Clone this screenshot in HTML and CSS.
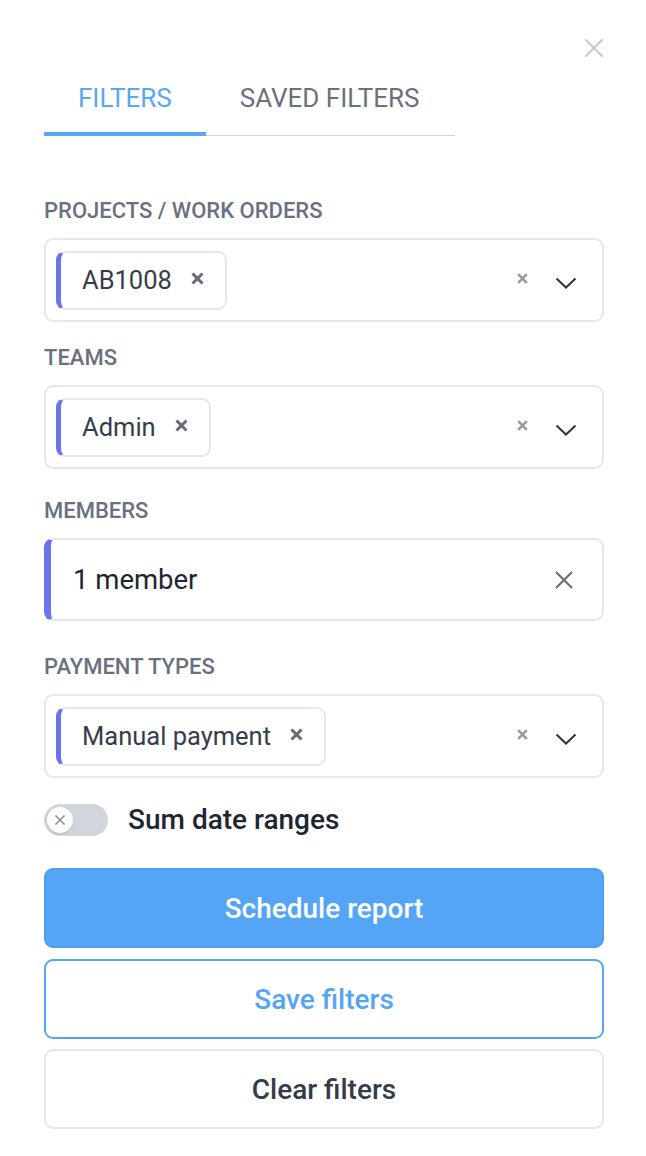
FILE: index.html
```html
<!DOCTYPE html>
<html lang="en">
<head>
    <meta charset="UTF-8">
    <meta name="viewport" content="width=device-width, initial-scale=1.0">
    <title>Filters</title>
    <link rel="stylesheet" href="styles.css">
</head>
<body>
    <div class="drawer">
        <div class="drawer-top">
            <button class="close-btn" aria-label="Close">
                <svg width="20" height="20" viewBox="0 0 20 20"><path d="M2 2L18 18M18 2L2 18" stroke="#c9c9c9" stroke-width="2.2" stroke-linecap="round"/></svg>
            </button>
        </div>

        <div class="tabs">
            <div class="tab active">Filters</div>
            <div class="tab">Saved filters</div>
        </div>

        <div class="field field-projects">
            <div class="field-label">Projects / Work orders</div>
            <div class="select">
                <div class="tags">
                    <span class="tag">AB1008
                        <svg class="tag-x" width="13" height="13" viewBox="0 0 13 13"><path d="M1.5 1.5L11.5 11.5M11.5 1.5L1.5 11.5" stroke="#656b78" stroke-width="3"/></svg>
                    </span>
                </div>
                <svg class="clear-x" width="11" height="11" viewBox="0 0 11 11"><path d="M1.2 1.2L9.8 9.8M9.8 1.2L1.2 9.8" stroke="#9b9b9b" stroke-width="2.6"/></svg>
                <svg class="chevron" width="22" height="12" viewBox="0 0 22 12"><path d="M1.5 1.5L11 10.5L20.5 1.5" fill="none" stroke="#2d3544" stroke-width="2"/></svg>
            </div>
        </div>

        <div class="field field-teams">
            <div class="field-label">Teams</div>
            <div class="select">
                <div class="tags">
                    <span class="tag">Admin
                        <svg class="tag-x" width="13" height="13" viewBox="0 0 13 13"><path d="M1.5 1.5L11.5 11.5M11.5 1.5L1.5 11.5" stroke="#656b78" stroke-width="3"/></svg>
                    </span>
                </div>
                <svg class="clear-x" width="11" height="11" viewBox="0 0 11 11"><path d="M1.2 1.2L9.8 9.8M9.8 1.2L1.2 9.8" stroke="#9b9b9b" stroke-width="2.6"/></svg>
                <svg class="chevron" width="22" height="12" viewBox="0 0 22 12"><path d="M1.5 1.5L11 10.5L20.5 1.5" fill="none" stroke="#2d3544" stroke-width="2"/></svg>
            </div>
        </div>

        <div class="field field-members">
            <div class="field-label">Members</div>
            <div class="select select-members">
                <span class="members-value">1 member</span>
                <svg class="members-x" width="20" height="20" viewBox="0 0 20 20"><path d="M2 2L18 18M18 2L2 18" stroke="#6f6f6f" stroke-width="2.2"/></svg>
            </div>
        </div>

        <div class="field field-payments">
            <div class="field-label">Payment types</div>
            <div class="select">
                <div class="tags">
                    <span class="tag">Manual payment
                        <svg class="tag-x" width="13" height="13" viewBox="0 0 13 13"><path d="M1.5 1.5L11.5 11.5M11.5 1.5L1.5 11.5" stroke="#656b78" stroke-width="3"/></svg>
                    </span>
                </div>
                <svg class="clear-x" width="11" height="11" viewBox="0 0 11 11"><path d="M1.2 1.2L9.8 9.8M9.8 1.2L1.2 9.8" stroke="#9b9b9b" stroke-width="2.6"/></svg>
                <svg class="chevron" width="22" height="12" viewBox="0 0 22 12"><path d="M1.5 1.5L11 10.5L20.5 1.5" fill="none" stroke="#2d3544" stroke-width="2"/></svg>
            </div>
        </div>

        <label class="toggle-row">
            <span class="toggle">
                <span class="knob">
                    <svg width="12" height="12" viewBox="0 0 12 12"><path d="M1.5 1.5L10.5 10.5M10.5 1.5L1.5 10.5" stroke="#8a8f99" stroke-width="1.6"/></svg>
                </span>
            </span>
            <span class="toggle-text">Sum date ranges</span>
        </label>

        <div class="actions">
            <button class="btn btn-primary">Schedule report</button>
            <button class="btn btn-outline">Save filters</button>
            <button class="btn btn-plain">Clear filters</button>
        </div>
    </div>
</body>
</html>
```

FILE: styles.css
```css
body {
    margin: 0;
    font-family: Roboto, "Liberation Sans", sans-serif;
    background-color: #fff;
    color: #1f2937;
}
.drawer {
    width: 560px;
    padding: 38px 42px 0 44px;
}
.drawer-top {
    display: flex;
    justify-content: flex-end;
    height: 40px;
}
.close-btn {
    background: none;
    border: none;
    padding: 0;
    width: 20px;
    height: 20px;
    cursor: pointer;
}
.tabs {
    display: flex;
    width: 411px;
    border-bottom: 1px solid #d4d4d8;
    margin-top: 5px;
}
.tab {
    padding: 0 34px 19px;
    font-size: 26px;
    line-height: 30px;
    text-transform: uppercase;
    color: #6b7080;
    margin-bottom: -1px;
    border-bottom: 4px solid transparent;
}
.tab.active {
    color: #59a8f6;
    border-bottom-color: #59a8f6;
}
.field-label {
    font-size: 22px;
    line-height: 24px;
    font-weight: 500;
    text-transform: uppercase;
    color: #6b7080;
    margin-bottom: 15px;
}
.field-projects {
    margin-top: 63px;
}
.field-teams {
    margin-top: 24px;
}
.field-members {
    margin-top: 30px;
}
.field-payments {
    margin-top: 34px;
}
.select {
    display: flex;
    align-items: center;
    height: 84px;
    box-sizing: border-box;
    border: 2px solid #e6e7ec;
    border-radius: 9px;
    padding: 0 25px 0 10px;
}
.tags {
    flex: 1;
    display: flex;
}
.tag {
    display: inline-flex;
    align-items: center;
    height: 59px;
    box-sizing: border-box;
    padding: 0 21px 0 21px;
    border: 2px solid #e6e7ec;
    border-left: 5px solid #6b74ee;
    border-radius: 9px;
    font-size: 25.5px;
    color: #353d4b;
}
.tag-x {
    margin-left: 19px;
    margin-top: -4px;
}
.clear-x {
    margin-right: 27px;
    margin-top: -4px;
}
.chevron {
    margin-top: 6px;
}
.select-members {
    height: 83px;
    border-left: 7px solid #6b74ee;
    padding: 0 28px 0 22px;
    justify-content: space-between;
}
.members-value {
    font-size: 27.5px;
    color: #1f2633;
}
.toggle-row {
    display: flex;
    align-items: center;
    margin-top: 25px;
    gap: 20px;
}
.toggle {
    display: flex;
    align-items: center;
    width: 64px;
    height: 32px;
    box-sizing: border-box;
    padding: 0 3px;
    border-radius: 16px;
    background-color: #d2d5db;
}
.knob {
    display: flex;
    align-items: center;
    justify-content: center;
    width: 26px;
    height: 26px;
    border-radius: 50%;
    background-color: #fff;
    box-shadow: 0 1px 2px rgba(0,0,0,0.15);
}
.toggle-text {
    font-size: 28px;
    font-weight: 500;
    color: #1f2633;
}
.actions {
    display: flex;
    flex-direction: column;
    margin-top: 32px;
}
.btn {
    height: 80px;
    box-sizing: border-box;
    border-radius: 9px;
    font-family: Roboto, "Liberation Sans", sans-serif;
    font-size: 28px;
    font-weight: 500;
    cursor: pointer;
}
.btn-primary {
    background-color: #55a5f7;
    border: 2px solid #4d9ef2;
    color: #fff;
}
.btn-outline {
    margin-top: 11px;
    background-color: #fff;
    border: 2px solid #55a5f7;
    color: #55a5f7;
}
.btn-plain {
    margin-top: 10px;
    background-color: #fff;
    border: 2px solid #e6e7ec;
    color: #343b49;
}
```
